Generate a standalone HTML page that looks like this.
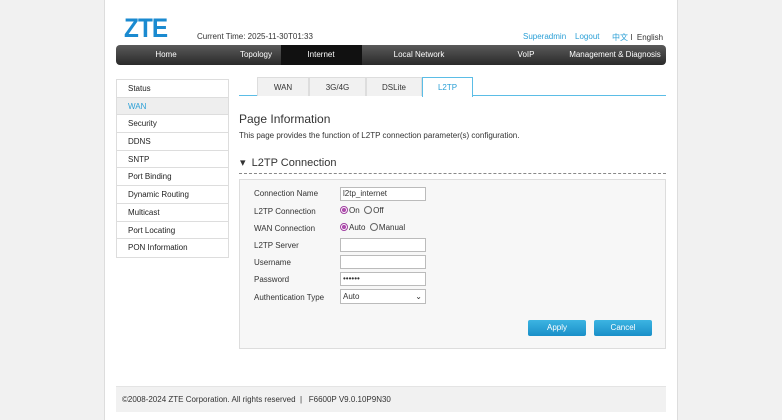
<!DOCTYPE html><html><head><style>
*{margin:0;padding:0;box-sizing:border-box}
body{width:782px;height:420px;background:#f1f1f1;font-family:"Liberation Sans","Noto Sans CJK SC",sans-serif;position:relative;overflow:hidden;font-size:8px;color:#333}
.a{position:absolute;white-space:nowrap}
#wrap{left:104px;top:0;width:574px;height:420px;background:#fff;border-left:1px solid #ddd;border-right:1px solid #ddd}
.nav{left:116px;top:45px;width:550px;height:20px;border-radius:4px;background:linear-gradient(#5a5a5a,#2a2a2a);color:#fff;font-size:8px}
.nav span{position:absolute;top:5px;transform:translateX(-50%);white-space:nowrap}
.side{left:116px;top:79px;width:113px;border:1px solid #ddd}
.side div{height:17.7px;line-height:17px;padding-left:11px;border-bottom:1px solid #ddd;font-size:8px;color:#222;overflow:hidden}
.side div:last-child{border-bottom:none}
.tab{top:77px;height:19px;line-height:19px;text-align:center;background:#f1f1f1;border:1px solid #ddd;border-bottom:none;font-size:8px}
.lbl{left:254px;font-size:8px;color:#333}
.in{left:340px;width:86px;height:14px;border:1px solid #bbb;background:#fff;font-size:8px;padding-left:2px;line-height:12px}
.rad{display:inline-block;width:8px;height:8px;border-radius:50%;border:1px solid #666;vertical-align:-1px;margin-right:1px}
.on{border-color:#a040a0;background:radial-gradient(#b050b0 45%,#fff 55%)}
.btn{top:320px;width:58px;height:16px;line-height:16px;text-align:center;color:#fff;background:linear-gradient(#3cb4e2,#1a8fc8);border-radius:2px;font-size:8px}
</style></head><body>
<div class="a" id="wrap"></div>
<div class="a" style="left:124px;top:13px;font-size:27px;font-weight:bold;color:#1a8ad0;letter-spacing:-1px;transform:scaleX(.9);transform-origin:left">ZTE</div>
<div class="a" style="left:197px;top:32px;font-size:8px">Current Time: 2025-11-30T01:33</div>
<div class="a" style="left:523px;top:32px;font-size:8px;color:#2a9fd6">Superadmin&nbsp;&nbsp;&nbsp;&nbsp;Logout</div>
<div class="a" style="left:612px;top:32px;font-size:8px"><span style="color:#2a9fd6">中文</span> I &nbsp;English</div>
<div class="a nav"><div class="a" style="left:165px;top:0;width:81px;height:20px;background:#111"></div>
<span style="left:50px">Home</span><span style="left:140px">Topology</span><span style="left:205px">Internet</span><span style="left:303px">Local Network</span><span style="left:410px">VoIP</span><span style="left:499px">Management &amp; Diagnosis</span></div>
<div class="a side"><div>Status</div><div style="background:#eee;color:#2a9fd6">WAN</div><div>Security</div><div>DDNS</div><div>SNTP</div><div>Port Binding</div><div>Dynamic Routing</div><div>Multicast</div><div>Port Locating</div><div>PON Information</div></div>
<div class="a" style="left:239px;top:95px;width:427px;height:1px;background:#5bbde6"></div>
<div class="a tab" style="left:257px;width:52px">WAN</div>
<div class="a tab" style="left:309px;width:57px">3G/4G</div>
<div class="a tab" style="left:366px;width:56px">DSLite</div>
<div class="a tab" style="left:422px;width:51px;height:20px;background:#fff;border:1px solid #5bbde6;border-bottom:none;color:#2a9fd6">L2TP</div>
<div class="a" style="left:239px;top:112px;font-size:12px;color:#333">Page Information</div>
<div class="a" style="left:239px;top:131px;font-size:8px">This page provides the function of L2TP connection parameter(s) configuration.</div>
<div class="a" style="left:240px;top:156px;font-size:11px">▾&nbsp; L2TP Connection</div>
<div class="a" style="left:239px;top:173px;width:427px;border-top:1px dashed #888"></div>
<div class="a" style="left:239px;top:179px;width:427px;height:170px;background:#f7f7f7;border:1px solid #ddd"></div>
<div class="a lbl" style="top:189px">Connection Name</div><div class="a in" style="top:187px">l2tp_internet</div>
<div class="a lbl" style="top:207px">L2TP Connection</div><div class="a" style="left:340px;top:206px;font-size:8px"><span class="rad on"></span>On &nbsp;<span class="rad"></span>Off</div>
<div class="a lbl" style="top:224px">WAN Connection</div><div class="a" style="left:340px;top:223px;font-size:8px"><span class="rad on"></span>Auto &nbsp;<span class="rad"></span>Manual</div>
<div class="a lbl" style="top:241px">L2TP Server</div><div class="a in" style="top:238px"></div>
<div class="a lbl" style="top:258px">Username</div><div class="a in" style="top:255px"></div>
<div class="a lbl" style="top:275px">Password</div><div class="a in" style="top:272px">••••••</div>
<div class="a lbl" style="top:293px">Authentication Type</div><div class="a in" style="top:289px;height:15px;line-height:13px">Auto<span style="float:right;margin-right:3px">⌄</span></div>
<div class="a btn" style="left:528px">Apply</div><div class="a btn" style="left:594px">Cancel</div>
<div class="a" style="left:116px;top:386px;width:550px;height:26px;background:#f1f1f1;border-top:1px solid #e4e4e4;font-size:8px;line-height:25px;padding-left:6px">©2008-2024 ZTE Corporation. All rights reserved &nbsp;| &nbsp;&nbsp;F6600P V9.0.10P9N30</div>
</body></html>
